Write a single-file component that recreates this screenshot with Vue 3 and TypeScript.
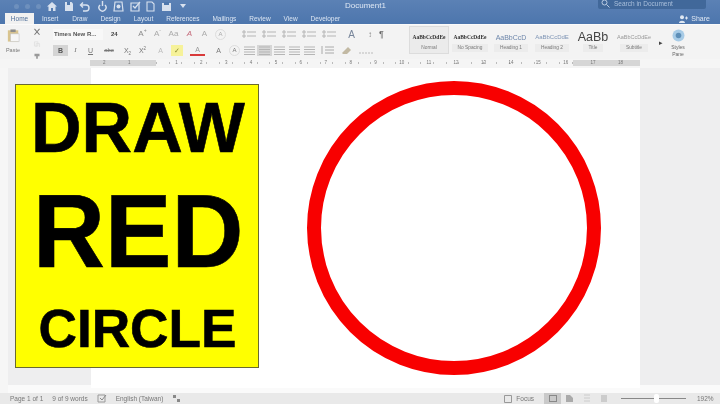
<script setup lang="ts">
const tabs: string[] = ['Insert', 'Draw', 'Design', 'Layout', 'References', 'Mailings', 'Review', 'View', 'Developer']
const styles = [
  { sample: 'AaBbCcDdEe', label: 'Normal', cls: 'bold', on: true },
  { sample: 'AaBbCcDdEe', label: 'No Spacing', cls: 'bold', on: false },
  { sample: 'AaBbCcD', label: 'Heading 1', cls: 'h1', on: false },
  { sample: 'AaBbCcDdE', label: 'Heading 2', cls: 'h2', on: false },
  { sample: 'AaBb', label: 'Title', cls: 'title', on: false },
  { sample: 'AaBbCcDdEe', label: 'Subtitle', cls: 'sub', on: false },
]
const ticks: number[] = Array.from({ length: 34 }, (_, i) => i)
const nums: string[] = ['2', '1', '', '1', '2', '3', '4', '5', '6', '7', '8', '9', '10', '11', '12', '13', '14', '15', '16', '17', '18']
</script>

<template>
  <div class="app">
    <header class="chrome">
      <div class="title-row">
        <div class="lights"><i></i><i></i><i></i></div>
        <div class="quick">
          <svg width="12" height="11" viewBox="0 0 12 11"><path d="M6 1 1 5.500h1.500V10h2.500V7h2v3h2.500V5.500H11Z" fill="#dfe7f2"/></svg>
          <svg width="10" height="11" viewBox="0 0 10 11"><path d="M1 1h6.500L9 2.500V10H1Z" fill="#dfe7f2"/><path d="M3 1h3v3H3Z" fill="#4f78ad"/></svg>
          <svg width="12" height="11" viewBox="0 0 12 11"><path d="M2 4h5a3 3 0 0 1 0 6H4M4 1.500 1.500 4 4 6.500" fill="none" stroke="#dfe7f2" stroke-width="1.400"/></svg>
          <svg width="11" height="11" viewBox="0 0 11 11"><path d="M8 4a3.500 3.500 0 1 1-5 0M5.500 0v5" fill="none" stroke="#dfe7f2" stroke-width="1.400"/></svg>
          <svg width="11" height="11" viewBox="0 0 11 11"><path d="M2 1h7l1 9H1Z" fill="none" stroke="#dfe7f2" stroke-width="1.200"/><circle cx="5.500" cy="5.500" r="2" fill="#dfe7f2"/></svg>
          <svg width="11" height="11" viewBox="0 0 11 11"><path d="M1 2h8v8H1Z" fill="none" stroke="#dfe7f2" stroke-width="1.200"/><path d="m3 5 2 2 5-6" fill="none" stroke="#dfe7f2" stroke-width="1.200"/></svg>
          <svg width="9" height="11" viewBox="0 0 9 11"><path d="M1 1h5l2 2v7H1Z" fill="none" stroke="#dfe7f2" stroke-width="1.100"/></svg>
          <svg width="11" height="11" viewBox="0 0 11 11"><path d="M1 2h9v8H1Z" fill="#dfe7f2"/><path d="M3 1h5v3H3Z" fill="#4f78ad"/></svg>
          <svg class="drop" width="8" height="8" viewBox="0 0 8 8"><path d="M1 2h6L4 6Z" fill="#dfe7f2"/></svg>
        </div>
        <div class="doc-name">Document1</div>
        <div class="search">
          <svg width="9" height="9" viewBox="0 0 9 9"><circle cx="3.500" cy="3.500" r="2.500" fill="none" stroke="#b9cbe2"/><path d="m5.500 5.500 3 3" stroke="#b9cbe2"/></svg>
          <span>Search in Document</span>
        </div>
      </div>
      <div class="tab-row">
        <div class="tab active">Home</div>
        <div v-for="t in tabs" :key="t" class="tab" :class="'t-' + t.toLowerCase()">{{ t }}</div>
        <div class="share">
          <svg width="9" height="8" viewBox="0 0 9 8"><circle cx="3" cy="2.200" r="2" fill="#dfe7f2"/><path d="M0 8c0-3 6-3 6 0Z" fill="#dfe7f2"/><path d="M6 3h3M7.500 1.500v3" stroke="#dfe7f2"/></svg>
          <span>Share</span>
        </div>
      </div>
    </header>

    <section class="ribbon">
      <div class="paste-group">
        <div class="paste">
          <svg width="13" height="15" viewBox="0 0 15 16"><path d="M1 2h12v13H1Z" fill="#d9c48f"/><path d="M4 1h6v3H4Z" fill="#8d8d8d"/><path d="M4 6h10v9H4Z" fill="#f6f6f6" stroke="#bbb" stroke-width=".6"/></svg>
          <span>Paste</span>
        </div>
        <div class="clip">
          <svg width="8" height="9" viewBox="0 0 8 9"><path d="M1 1 7 8M7 1 1 8" stroke="#777" stroke-width="1.200"/></svg>
          <svg width="8" height="8" viewBox="0 0 8 8"><path d="M1 1h4v5H1ZM3 3h4v5H3Z" fill="none" stroke="#ddd" stroke-width=".8"/></svg>
          <svg width="8" height="8" viewBox="0 0 8 8"><path d="M1 2h6v3H1ZM3 5h2v3H3Z" fill="#999"/></svg>
        </div>
      </div>

      <div class="font-group">
        <div class="row">
          <div class="font-name">Times New R...</div>
          <div class="font-size">24</div>
          <span class="ic">A<sup>+</sup></span>
          <span class="ic light">A<sup>-</sup></span>
          <span class="ic light wide">Aa</span>
          <span class="ic paint">A</span>
          <span class="ic light">A</span>
          <span class="ic light circ">A</span>
        </div>
        <div class="row second">
          <span class="fmt on b">B</span>
          <span class="fmt i">I</span>
          <span class="fmt u">U</span>
          <span class="fmt abc">abc</span>
          <span class="fmt">X<sub>2</sub></span>
          <span class="fmt">X<sup>2</sup></span>
          <span class="fmt pale">A</span>
          <span class="fmt hl">✓</span>
          <span class="fmt fcolor">A</span>
          <span class="fmt shade">A</span>
          <span class="fmt circ">A</span>
        </div>
      </div>

      <div class="para-group">
        <div class="row">
          <svg v-for="n in 5" :key="n" class="list" width="15" height="9" viewBox="0 0 15 9"><path d="M1 1h2v2H1Zm0 4h2v2H1ZM5 2h9M5 6h9" stroke="#b5b5b5" fill="none"/></svg>
          <span class="sort">A</span>
          <span class="az">↕</span>
          <span class="pil">¶</span>
        </div>
        <div class="row second">
          <svg v-for="n in 5" :key="n" class="align" :class="{ on: n === 2 }" width="15" height="11" viewBox="0 0 15 11"><path d="M2 2h11M2 4.500h11M2 7h11M2 9.500h11" stroke="#b5b5b5"/></svg>
          <svg class="list first" width="15" height="10" viewBox="0 0 15 10"><path d="M2 1v8M5 2h9M5 5h9M5 8h9" stroke="#aaa" fill="none"/></svg>
          <svg class="list" width="13" height="10" viewBox="0 0 13 10"><path d="M2 8 8 2l3 3-4 4H3Z" fill="#c2b9a3"/></svg>
          <svg class="list" width="16" height="10" viewBox="0 0 16 10"><path d="M1 8h14" stroke="#bbb" stroke-dasharray="2 1"/></svg>
        </div>
      </div>

      <div class="gallery">
        <div v-for="s in styles" :key="s.label" class="style" :class="[s.cls, { on: s.on }]">
          <div class="sample">{{ s.sample }}</div>
          <div class="label">{{ s.label }}</div>
        </div>
      </div>
      <span class="more">▸</span>
      <div class="pane">
        <svg width="13" height="13" viewBox="0 0 13 13"><circle cx="6.500" cy="6.500" r="6" fill="#a7cbe6"/><circle cx="6.500" cy="6.500" r="2.800" fill="#5e8fb8"/></svg>
        <span>Styles<br />Pane</span>
      </div>
    </section>

    <div class="ruler">
      <div class="ruler-end left"></div>
      <div class="ruler-mid">
        <span v-for="t in ticks" :key="t" class="tick"></span>
      </div>
      <div class="ruler-end right"></div>
      <div class="ruler-nums">
        <span v-for="(n, i) in nums" :key="i">{{ n }}</span>
      </div>
    </div>

    <main class="workspace">
      <div class="v-ruler"></div>
      <div class="margin"></div>
      <div class="page"></div>
      <div class="side"></div>

      <div class="poster">
        <div class="word-draw">DRAW</div>
        <div class="word-red">RED</div>
        <div class="word-circle">CIRCLE</div>
      </div>
      <div class="ring"></div>
    </main>

    <footer class="status">
      <span class="st">Page 1 of 1</span>
      <span class="st">9 of 9 words</span>
      <svg width="10" height="9" viewBox="0 0 10 9"><path d="M1 1h7v7H1Z" fill="none" stroke="#999"/><path d="m3 4 2 2 4-5" fill="none" stroke="#888"/></svg>
      <span class="st">English (Taiwan)</span>
      <svg width="9" height="9" viewBox="0 0 9 9"><path d="M1 1h3v3H1ZM5 5h3v3H5Z" fill="#888"/></svg>
      <div class="status-right">
        <svg width="8" height="8" viewBox="0 0 8 8"><path d="M.5.5h7v7h-7Z" fill="none" stroke="#999"/></svg>
        <span class="st">Focus</span>
        <span class="view on"><i></i></span>
        <svg width="9" height="9" viewBox="0 0 9 9"><path d="M1 1h4l3 3v4H1Z" fill="#aaa"/></svg>
        <svg class="view-i" width="8" height="9" viewBox="0 0 8 9"><path d="M1 1h6M1 4h6M1 7h6" stroke="#ccc"/></svg>
        <svg class="view-i" width="8" height="9" viewBox="0 0 8 9"><path d="M1 1h6v7H1Z" fill="#ccc"/></svg>
        <div class="slider"><b></b></div>
        <span class="st pct">192%</span>
      </div>
    </footer>
  </div>
</template>

<style scoped>
.app {
  width: 720px;
  height: 404px;
  overflow: hidden;
  display: flex;
  flex-direction: column;
  font-family: "Liberation Sans", Arial, sans-serif;
  background: #fff;
  position: relative;
}
.chrome {
  height: 24px;
  flex: none;
  background: linear-gradient(#5b81b5, #4d76ad);
  display: flex;
  flex-direction: column;
  filter: blur(0.6px);
}
.title-row {
  height: 12px;
  display: flex;
  align-items: center;
  position: relative;
  padding-left: 14px;
}
.lights { display: flex; gap: 6px; width: 32px; }
.lights i { width: 5px; height: 5px; border-radius: 50%; background: #6e90bd; }
.quick { display: flex; gap: 5.500px; align-items: center; opacity: .95; }
.quick svg { flex: none; }
.drop { margin-left: 2px; }
.doc-name {
  position: absolute;
  left: 345px;
  top: 1px;
  font-size: 8px;
  color: #dfe8f4;
}
.search {
  position: absolute;
  left: 598px;
  top: -2px;
  width: 108px;
  height: 11px;
  background: #41689a;
  border-radius: 2px;
  display: flex;
  align-items: center;
  gap: 4px;
  padding-left: 3px;
  font-size: 6.500px;
  color: #a9bfdb;
  box-sizing: border-box;
}
.tab-row {
  height: 12px;
  display: flex;
  align-items: flex-end;
  position: relative;
  padding-left: 5px;
}
.tab {
  font-size: 6.500px;
  line-height: 11px;
  color: #dbe5f2;
  margin-left: 13px;
  white-space: nowrap;
}
.tab.active {
  margin-left: 0;
  width: 29px;
  height: 11px;
  background: #f1f1f1;
  color: #50709a;
  text-align: center;
  margin-right: -5px;
}
.t-draw { margin-left: 14px; }
.share {
  margin-left: auto;
  margin-right: 10px;
  display: flex;
  align-items: center;
  gap: 3px;
  font-size: 7px;
  line-height: 11px;
  color: #dfe7f2;
}
.ribbon {
  height: 35px;
  flex: none;
  background: #f3f3f3;
  display: flex;
  align-items: stretch;
  position: relative;
  filter: blur(0.6px);
  border-top: 1px solid #fafafa;
  box-sizing: border-box;
}
.paste-group { width: 48px; display: flex; flex: none; padding-left: 5px; box-sizing: border-box; }
.paste { display: flex; flex-direction: column; align-items: center; gap: 4px; padding-top: 3px; font-size: 5.500px; color: #777; width: 16px; }
.clip { display: flex; flex-direction: column; gap: 5px; padding: 3px 0 0 12px; }
.font-group { width: 190px; flex: none; padding: 3px 0 0 5px; box-sizing: border-box; }
.row { display: flex; align-items: center; height: 12px; }
.row.second { margin-top: 4px; }
.font-name { width: 49px; height: 11px; line-height: 11px; background: #f8f8f8; font-size: 6px; font-weight: bold; color: #555; white-space: nowrap; overflow: hidden; padding-left: 1px; margin-right: 8px; flex: none; }
.font-size { width: 24px; font-size: 6px; font-weight: bold; color: #444; flex: none; }
.ic { width: 15px; flex: none; font-size: 8px; color: #8a8a8a; text-align: center; line-height: 10px; }
.ic sup { font-size: 5px; line-height: 0; }
.ic.light { color: #aaa; }
.ic.wide { width: 17px; }
.ic.paint { color: #c46a7a; font-style: italic; }
.ic.circ { border: 1px solid #ddd; border-radius: 50%; width: 9px; height: 9px; font-size: 6px; line-height: 9px; margin-left: 3px; }
.fmt { width: 15px; height: 11px; flex: none; text-align: center; font-size: 7px; line-height: 11px; color: #777; }
.fmt sub, .fmt sup { font-size: 4.500px; line-height: 0; }
.fmt.on { background: #d4d4d4; }
.fmt.b { font-weight: bold; color: #555; }
.fmt.i { font-style: italic; font-family: "Liberation Serif", serif; }
.fmt.u { text-decoration: underline; }
.fmt.abc { width: 22px; text-decoration: line-through; font-size: 6px; }
.fmt.pale { color: #bbb; margin-left: 3px; }
.fmt.hl { color: #8a8a30; background: #f6f29a; width: 12px; margin: 0 3px; }
.fmt.fcolor { color: #999; border-bottom: 2px solid #d83a3a; height: 9px; line-height: 9px; margin-left: 4px; }
.fmt.shade { margin-left: 6px; }
.fmt.circ { border: 1px solid #ddd; border-radius: 50%; width: 9px; height: 9px; font-size: 6px; line-height: 9px; margin-left: 3px; }
.para-group { width: 171px; flex: none; padding: 3px 0 0 4px; box-sizing: border-box; }
.list { margin-right: 5px; flex: none; }
.list.first { margin-left: 3px; }
.sort { font-size: 10px; color: #77859a; width: 19px; text-align: center; flex: none; }
.az { font-size: 8px; color: #888; width: 18px; text-align: center; flex: none; }
.pil { font-size: 9px; color: #666; width: 12px; flex: none; }
.align { width: 15px; flex: none; }
.align.on { background: #d6d6d6; }
.gallery { display: flex; gap: 1px; flex: none; padding-top: 1px; height: 30px; }
.style { width: 40px; height: 28px; display: flex; flex-direction: column; align-items: center; box-sizing: border-box; padding-top: 7px; white-space: nowrap; overflow: hidden; flex: none; }
.style.on { background: #ebebeb; border: 1px solid #dcdcdc; padding-top: 6px; }
.sample { font-size: 5.500px; line-height: 9px; color: #333; font-family: "Liberation Serif", serif; height: 9px; display: flex; align-items: center; }
.style.bold .sample { font-weight: bold; }
.style.h1 .sample { color: #6e87ab; font-size: 7px; font-family: "Liberation Sans", sans-serif; }
.style.h2 .sample { color: #7f95b5; font-size: 6px; font-family: "Liberation Sans", sans-serif; }
.style.title .sample { color: #444; font-size: 12.500px; font-family: "Liberation Sans", sans-serif; }
.style.sub .sample { color: #999; font-size: 5.500px; font-family: "Liberation Sans", sans-serif; }
.label { font-size: 4.800px; color: #777; line-height: 8px; margin-top: 2px; background: #ececec; padding: 0 6px; }
.style.on .label { background: none; }
.more { font-size: 7px; color: #444; width: 10px; text-align: center; line-height: 35px; margin-left: 2px; flex: none; }
.pane { display: flex; flex-direction: column; align-items: center; font-size: 5px; color: #666; line-height: 7px; padding-top: 4px; gap: 2px; width: 24px; text-align: center; flex: none; }
.ruler {
  height: 9px;
  flex: none;
  background: #f5f5f5;
  position: relative;
  display: flex;
  filter: blur(0.6px);
}
.ruler-end { background: #d6d6d6; height: 6px; margin-top: 1px; flex: none; }
.ruler-end.left { width: 66px; margin-left: 90px; }
.ruler-end.right { width: 67px; }
.ruler-mid { width: 417px; display: flex; justify-content: space-between; align-items: center; height: 8px; }
.tick { width: 1px; height: 2px; background: #bbb; }
.ruler-nums { position: absolute; left: 103px; top: 0; width: 520px; display: flex; justify-content: space-between; font-size: 4.500px; line-height: 8px; color: #777; }
.workspace {
  height: 325px;
  flex: none;
  display: flex;
  position: relative;
  background: #fafafa;
}
.v-ruler { width: 8px; background: #f6f6f6; flex: none; }
.margin { width: 83px; flex: none; height: 317px; background: #eeeeef; }
.page { width: 549px; flex: none; height: 320px; background: #fff; }
.side { flex: 1; height: 317px; background: #eeeeef; }
.poster {
  position: absolute;
  left: 15px;
  top: 16px;
  width: 244px;
  height: 284px;
  background: #ffff00;
  border: 1px solid #6a6a30;
  box-sizing: border-box;
  display: flex;
  flex-direction: column;
  align-items: center;
  color: #000;
  font-weight: bold;
  filter: blur(0.4px);
  -webkit-text-stroke: 0.6px #000;
}
.word-draw { font-size: 71px; line-height: 71px; margin-top: 6.500px; transform: translateX(0.500px) scaleX(.986); }
.word-red { font-size: 103px; line-height: 103px; margin-top: 17.300px; transform: translateX(1.500px) scaleX(.967); }
.word-circle { font-size: 54px; line-height: 54px; margin-top: 18.500px; transform: scaleX(.985); }
.ring {
  position: absolute;
  left: 307px;
  top: 13px;
  width: 294px;
  height: 294px;
  box-sizing: border-box;
  border: 14px solid #f80000;
  border-radius: 50%;
  filter: blur(0.4px);
}
.status {
  flex: 1;
  background: #e9e9e9;
  display: flex;
  align-items: center;
  padding-left: 10px;
  font-size: 6.500px;
  color: #777;
  gap: 9px;
  filter: blur(0.6px);
  position: relative;
  z-index: 1;
}
.st { white-space: nowrap; }
.status-right { margin-left: auto; display: flex; align-items: center; gap: 4px; padding-right: 5px; }
.view { width: 17px; height: 11px; background: #c9c9c9; display: flex; align-items: center; justify-content: center; margin-left: 6px; }
.view i { width: 8px; height: 7px; border: 1px solid #888; box-sizing: border-box; }
.view-i { margin-left: 5px; }
.slider { width: 65px; height: 1px; background: #888; position: relative; margin: 0 7px 0 9px; }
.slider b { position: absolute; left: 33px; top: -4px; width: 5px; height: 9px; background: #fff; border-radius: 2px; }
.pct { width: 18px; }
</style>
